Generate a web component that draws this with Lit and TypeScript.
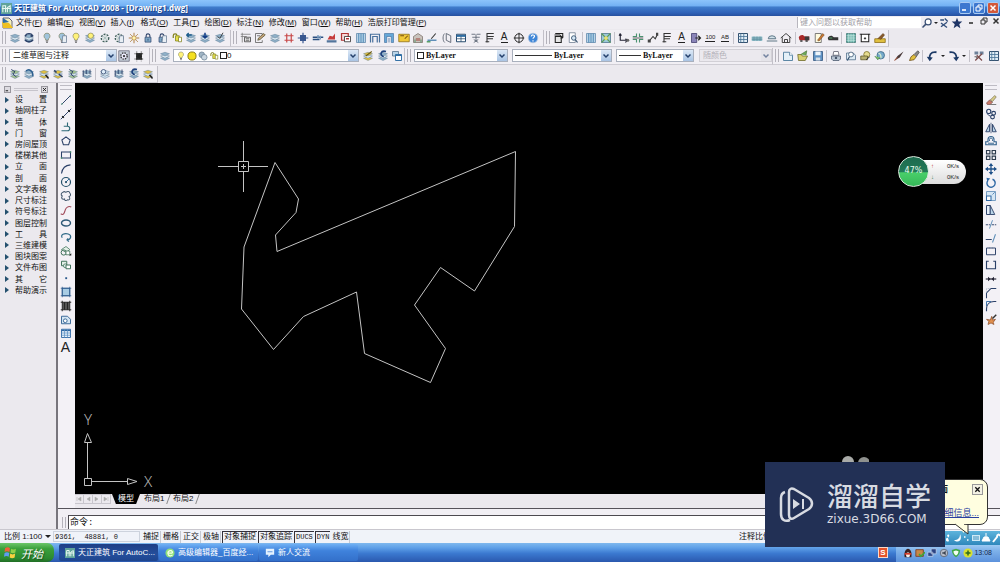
import { LitElement, html, svg, css, TemplateResult } from "lit";
import { customElement, property } from "lit/decorators.js";
import { classMap } from "lit/directives/class-map.js";

const NAVY = "#2b4068";
const BLUE = "#5f8fb8";
const PALE = "#b9d4e8";
const GOLD = "#e0c040";

/* Stack of sheets, the base of every layer icon */
const sheets = (c = "#8fb0c8") => svg`
  <path d="M2 11l6-2 6 2-6 3z" fill=${c} stroke="#5c7a94" stroke-width=".6"/>
  <path d="M2 8l6-2 6 2-6 3z" fill="#dce9f2" stroke="#5c7a94" stroke-width=".6"/>
  <path d="M2 5l6-2 6 2-6 3z" fill=${c} stroke="#5c7a94" stroke-width=".6"/>`;
const bulb = (c: string) => svg`
  <path d="M8 1.5a4 4 0 0 0-2.3 7.3l.6 2h3.4l.6-2A4 4 0 0 0 8 1.5z" fill=${c} stroke="#7a7a50" stroke-width=".8"/>
  <path d="M6.4 12h3.2M6.8 13.8h2.4" stroke="#555" stroke-width="1.2"/>`;
const lock = (c: string) => svg`
  <path d="M5.5 7V5a2.5 2.5 0 0 1 5 0v2" fill="none" stroke=${NAVY} stroke-width="1.4"/>
  <path d="M4 7h8v6.5H4z" fill=${c} stroke=${NAVY} stroke-width=".9"/><path d="M8 9v2.5" stroke=${NAVY}/>`;
const page = svg`<path d="M9 5h5v9H8z" fill="#e8eef4" stroke="#5a6f88" stroke-width=".9"/>`;
const flake = svg`<circle cx="8" cy="8" r="5" fill="none" stroke="#3f5f5a" stroke-width="1.8" stroke-dasharray="2.6 1.6"/>
  <path d="M8 4v8M4 8h8M5.3 5.3l5.4 5.4M10.7 5.3l-5.4 5.4" stroke="#9fb8b4" stroke-width=".8"/>`;

const ICONS: Record<string, TemplateResult> = {
  layers: sheets(),
  layerBack: svg`${sheets()}<path d="M3 6c1-5 9-5 10 0M13 6l-3-1M3 10c1 4 9 4 10 0" fill="none" stroke=${NAVY} stroke-width="1.8"/>`,
  bulbBlue: bulb("#9fc4dc"),
  bulbPage: svg`${bulb("#9fc4dc")}${page}`,
  bulb: bulb("#fff27a"),
  bulbLayers: svg`${sheets()}<circle cx="9" cy="5" r="3.6" fill="#fff27a" stroke="#7a7a50" stroke-width=".8"/>`,
  flake,
  flakePage: svg`${flake}${page}`,
  sun: svg`<circle cx="8" cy="8" r="3" fill="#fff3b0" stroke="#a06a20"/>
    <path d="M8 1v3M8 12v3M1 8h3M12 8h3M3 3l2 2M11 11l2 2M13 3l-2 2M5 11l-2 2" stroke="#a06a20" stroke-width="1.1"/>`,
  lock: lock("#7da6c4"),
  lockPage: svg`${lock("#7da6c4")}${page}`,
  unlock: svg`<path d="M3 8V5a2.5 2.5 0 0 1 5 0" fill="none" stroke="#80801a" stroke-width="1.6"/><path d="M6 5h5v7H6z" fill="#e6e04a" stroke="#80801a"/><path d="M10 7h4v6h-4z" fill="#fff" stroke="#80801a"/>`,
  layerPrev: svg`${sheets()}<path d="M2 4h7M2 4l3-2.5M2 4l3 2.5" stroke="#1d5c8c" stroke-width="1.8" fill="none"/>`,
  layerDown: svg`${sheets()}<path d="M8 1v6M5 5l3 3 3-3" stroke="#123c86" stroke-width="2" fill="none"/>`,
  layerWalk: svg`${sheets()}<path d="M12 1L8 8M5 6l3 3" stroke="#333" stroke-width="1.2" fill="none"/>`,
  layerMove: svg`${sheets("#a7c68d")}<path d="M3 2l5 3-3 3 5 4" stroke=${NAVY} stroke-width="1.3" fill="none"/>`,
  layerArc: svg`${sheets()}<path d="M4 4c4-4 10 0 9 7" stroke="#2c5f90" stroke-width="2" fill="none"/>`,
  layerGold: svg`${sheets(GOLD)}<path d="M10 9l4 5" stroke="#222" stroke-width="2"/>`,
  layerGold2: svg`${sheets(GOLD)}<path d="M3 3l3 3M9 8l5 4" stroke=${NAVY} stroke-width="2"/>`,
  layerPins: svg`${sheets("#88a8c0")}<path d="M3 3v8M7 2v6M12 2v6" stroke=${NAVY} stroke-width="1.2"/>`,
  layerGlass: svg`${sheets("#cfdfee")}<circle cx="6" cy="5" r="3" fill="#dfeefa" stroke=${NAVY}/>`,
  axis: svg`<path d="M1 3h13M1 6h8M3 1v13" stroke="#777"/><path d="M6 7h8v6H6z" fill="#fff" stroke="#333"/><path d="M7.5 9h5M7.5 11h5" stroke="#333"/>`,
  edit: svg`<path d="M2 2h9v3M2 2v12h9v-3" fill="none" stroke="#555"/><path d="M5 11l1-3 7-6 2 2-7 6z" fill="#c6a27a" stroke="#553"/><path d="M4 5h4" stroke="#555"/>`,
  hash: svg`<path d="M5 2v12M11 2v12M2 5h12M2 11h12" stroke="#c84848" stroke-width="1.6"/>`,
  column: svg`<path d="M4 4h8v8H4z" fill="#3a5890"/><path d="M8 1v14M1 8h14" stroke="#3a5890" stroke-width="1.6"/>`,
  wall: svg`<path d="M1 7h14M1 10h9" stroke="#2b4f80" stroke-width="1.8"/><path d="M8 4v5M11 5v5" stroke="#7a9cc0" stroke-width="2"/>`,
  roofRed: svg`<path d="M2 10l3-5 4 1 3-4v8z" fill="#c63c3c"/><path d="M1 11h13v3H1z" fill="#53759c"/>`,
  room: svg`<path d="M2 2h9v9H2z" fill="#f4d8d8" stroke="#b03434" stroke-width="1.6"/><path d="M6 6h8v7H6z" fill="#fff" stroke="#222"/><path d="M8 9h4" stroke="#b03434" stroke-width="2"/>`,
  stripes: svg`<path d="M2 2h12v12H2z" fill=${PALE} stroke="#5f86a8"/><path d="M5 2v12M8 2v12M11 2v12" stroke="#4d88b4" stroke-width="1.3"/>`,
  door: svg`<path d="M2 14V3h12v11M5 14V6h6v8" fill="none" stroke="#48709c" stroke-width="1.6"/>`,
  doorFill: svg`<path d="M2 2h12v12h-3V6H5v8H2z" fill="#66a8d8" stroke="#3c6a98" stroke-width=".8"/><path d="M8 8v6" stroke="#3c6a98"/>`,
  window: svg`<path d="M1 3h14v10H1z" fill="#f0c838" stroke="#8a6a12"/><path d="M3 5h5M9 9l4-4" stroke="#7a5010" stroke-width="1.4"/>`,
  house: svg`<path d="M2 6l6-4 6 4v8H2z" fill="#c9c3bd" stroke="#7c7068"/><path d="M5 8h6v4H5z" fill="#b5847c"/><path d="M4 14v-4M12 14v-4" stroke="#6a9a7a" stroke-width="1.6"/>`,
  slope: svg`<path d="M2 11h12" stroke="#5f8fb8" stroke-width="2"/><path d="M13 2L7 9" stroke="#333" stroke-width="1.4"/><path d="M1 13h5" stroke="#57a068" stroke-width="2"/>`,
  brackets: svg`<path d="M5 2C2 4 2 12 5 14M7 2v9l6 3V5z" fill="none" stroke="#5c6472" stroke-width="1.2"/>`,
  table: svg`<path d="M2 3h12v10H2z" fill="#fff" stroke="#24486c" stroke-width="1.3"/><path d="M2 4h12v2.5H2z" fill="#2f6ea4"/><path d="M2 9h12M8 6v7" stroke="#24486c"/>`,
  north: svg`<path d="M2 3h5M9 3h5M3 7h10M5 10l6 4M11 10l-6 4M8 3v10" stroke="#56606e" stroke-width="1.1" fill="none"/>`,
  levels: svg`<path d="M4 14V2h9M4 6h9M4 9h8M2 13h5" stroke="#333" stroke-width="1.4" fill="none"/>`,
  target: svg`<circle cx="8" cy="8" r="5.6" fill="none" stroke="#222" stroke-width="1.3"/><path d="M8 1v14M1 8h14" stroke="#222" stroke-width="1.2"/>`,
  help: svg`<circle cx="8" cy="8" r="6.4" fill="#3f86d8" stroke="#b8c8dc"/><path d="M5.6 6c.4-3 5-2.4 4.4 0-.3 1.200-2 1.400-2 3M8 11v1.600" fill="none" stroke="#fff" stroke-width="1.6"/>`,
  fileOut: svg`<path d="M3 2h10v4M3 6h8v8H3z" fill="#e6e6e6" stroke="#222" stroke-width="1.400"/><path d="M2 4h7l4 4M13 8V5M13 8h-3" stroke="#222" stroke-width="1.4" fill="none"/>`,
  findPage: svg`<path d="M3 1h8v13H3z" fill="#fff" stroke="#69788c"/><circle cx="9" cy="8" r="3" fill="#d6e8f6" stroke="#34506e" stroke-width="1.2"/><path d="M11 10l3 4" stroke="#34506e" stroke-width="1.6"/>`,
  block: svg`<path d="M2 2h12v12H2z" fill="#9cc9d8" stroke="#4a7088"/><path d="M2 2l12 12M14 2L2 14" stroke="#5f9a56" stroke-width="1.5"/><circle cx="8" cy="8" r="2.500" fill="#e8e070"/>`,
  elbow: svg`<path d="M3 2v9h9M3 2L1.500 5M3 2l1.500 3M12 11l-2-2M12 11l-2 3" stroke="#223" stroke-width="1.5" fill="none"/><circle cx="13" cy="11" r="2" fill="#666"/>`,
  crossGreen: svg`<path d="M1 6h5V2M10 2v4h5M15 10h-5v4M6 14v-4H1" stroke="#4b9270" stroke-width="1.5" fill="none"/><path d="M1 8h14" stroke="#333"/>`,
  leader: svg`<path d="M2 13L8 6l3 3 3-6" stroke="#333" stroke-width="1.4" fill="none"/><path d="M1 10h4v4H1zM12 1h3v4h-3z" fill="#444"/>`,
  exit: svg`<path d="M2 2h7v12H2z" fill="#8a84b8" stroke="#3c3868"/><path d="M7 8h7M11 5l3 3-3 3" stroke="#222" stroke-width="1.5" fill="none"/>`,
  gridBlue: svg`<path d="M2 2h12v12H2z" fill="#e2eef6" stroke="#2f4d6c" stroke-width="1.300"/><path d="M5 2v12M2 6h12M2 10h12M9 2v12" stroke="#4a7396" stroke-width="1.1"/>`,
  hatch: svg`<path d="M1 6h14v6H1z" fill="#8fbcc8"/><path d="M1 8h14M1 10h14M4 6v6M8 6v6M12 6v6" stroke="#5a8c9c" stroke-width=".8"/>`,
  dome: svg`<path d="M3 9a5 4 0 0 1 10 0zM1 12h14" fill="#d2e2ea" stroke="#5b7484" stroke-width="1.3"/>`,
  home: svg`<path d="M1 8l7-6 7 6M3 7v7h10V7M6 14v-4h4v4" fill="none" stroke="#333" stroke-width="1.2"/>`,
  carRed: svg`<path d="M1 7c2-4 6-4 8-1h6v5H2z" fill="#a82828"/><path d="M9 6h6v5H9z" fill="#3b3b3b"/><path d="M3 11h3v2H3zM10 11h3v2h-3z" fill="#333"/>`,
  carDark: svg`<path d="M1 8c2-4 6-4 8-1h6v4H2z" fill="#333"/><path d="M3 8h4" stroke="#57a068" stroke-width="1.4"/>`,
  note: svg`<path d="M3 2h8v12H3z" fill="#fffbe0" stroke="#555"/><path d="M6 11l7-9 2 2-7 8z" fill="#d07a30" stroke="#5a3a1a" stroke-width=".7"/>`,
  weave: svg`<path d="M2 2h12v12H2z" fill="#62b0a8" stroke="#3e7470"/><path d="M2 5h12M2 8h12M2 11h12M5 2v12M8 2v12M11 2v12" stroke="#cfeae4" stroke-width=".9"/>`,
  viewport: svg`<path d="M3 3h10v10H3z" fill="#fff" stroke="#222" stroke-width="1.4"/><path d="M1 3h2M13 3h2M8 7v3M6.500 8.500h3" stroke="#222" stroke-width="1.2"/>`,
  brush: svg`<path d="M1 9h14v5H1z" fill=${GOLD} stroke="#8a6a12"/><path d="M5 9l7-7 2 2-5 6" fill="#8a5a2a" stroke="#4a3010" stroke-width=".7"/>`,
  gear: svg`<path d="M1 1h14v14H1z" fill="#c3cbd6" stroke="#667"/><circle cx="8" cy="8" r="4.200" fill="#eef" stroke="#333" stroke-width="1.8" stroke-dasharray="2 1.300"/><circle cx="8" cy="8" r="1.500" fill="#333"/>`,
  gearDark: svg`<path d="M4 4h8v9H4z" fill="#222"/><path d="M2 5h12M2 12h12M5 2v13M11 2v13" stroke="#444" stroke-width="1.300" stroke-dasharray="1.500 1"/>`,
  layerEdit: svg`${sheets(GOLD)}<path d="M13 2L5 8" stroke="#6a5a10" stroke-width="1.4"/>`,
  layerUndo: svg`${sheets()}<path d="M12 2C5 0 3 7 9 9" stroke="#1d3f7c" stroke-width="2.200" fill="none"/>`,
  layerState: svg`<path d="M2 2h8v6H2z" fill=${PALE} stroke="#4c6a86"/><path d="M6 6h8v8H6z" fill="#fff" stroke="#2f6ea4" stroke-width="1.300"/><path d="M6 7h8" stroke="#2f6ea4" stroke-width="2"/>`,
  discs: svg`<circle cx="6" cy="6" r="4.500" fill="#9fb4c4" stroke="#5c7488"/><circle cx="10" cy="10" r="4.500" fill="#c9d6e0" stroke="#5c7488"/>`,
  newFile: svg`<path d="M2 3h8l4 4v7H2z" fill="#e4f0f8" stroke="#4c7a9c" stroke-width="1.2"/><path d="M10 3v4h4" fill="#fff" stroke="#4c7a9c"/>`,
  open: svg`<path d="M1 6h5l1 2h7l-3 6H2z" fill="#d8d070" stroke="#6a6420"/><path d="M5 6l8-5-1 6" fill="#6ea858" stroke="#3f6a30" stroke-width=".8"/>`,
  save: svg`<path d="M2 2h12v12H2z" fill="#5f92c4" stroke="#2c4f78"/><path d="M4.500 2h7v5h-7z" fill="#eef4fa"/><path d="M5 10h6v4H5z" fill="#d6dfe8"/>`,
  print: svg`<path d="M5 2h6l1 5H4z" fill="#fff" stroke="#556"/><path d="M2 8h12v4l-2 2H4l-2-2z" fill="#b8c4d2" stroke="#45546a"/><circle cx="8" cy="10.500" r="1.600" fill="#45546a"/>`,
  preview: svg`<path d="M2 4h9l3 3v6H2z" fill="#dceaf4" stroke="#4c6a86"/><circle cx="8" cy="6" r="3.200" fill="#fff" stroke="#34506e"/><path d="M6 9l-3 5" stroke="#34506e" stroke-width="1.6"/>`,
  plot: svg`<circle cx="9" cy="6" r="4" fill="#e6dc90" stroke="#746a20"/><path d="M1 8h9v5H1z" fill="#b8b070" stroke="#5a5420"/><path d="M8 13l5-4" stroke="#333" stroke-width="1.3"/>`,
  globe: svg`<circle cx="9" cy="7" r="5" fill="#76aacb" stroke="#34607e"/><path d="M6 4c2 1 4 3 3 7" fill="none" stroke="#d8ecd0" stroke-width="1.800"/><path d="M1 8l4 5 3-3" fill="#7cbf6a" stroke="#2f6a38" stroke-width=".8"/>`,
  knife: svg`<path d="M2 14l4-6 8-6-5 8z" fill="#4a3a3a"/><path d="M2 14l4-4" stroke="#a05038" stroke-width="1.400"/>`,
  match: svg`<path d="M2 14l2-5 4-3 3 3-3 4z" fill=${GOLD} stroke="#6a4a10"/><path d="M8 6l5-5 2 2-4 6" fill="#888" stroke="#333" stroke-width=".8"/>`,
  undo: svg`<path d="M14 3C6 2 4 7 5 12" fill="none" stroke="#1d3a66" stroke-width="2.400"/><path d="M1 9l4 6 4-5z" fill="#1d3a66"/>`,
  redo: svg`<path d="M2 3c8-1 10 4 9 9" fill="none" stroke="#1d3a66" stroke-width="2.400"/><path d="M15 9l-4 6-4-5z" fill="#1d3a66"/>`,
  tools: svg`<path d="M2 2h5v4H2zM9 2h5v4H9z" fill="#6d8098"/><path d="M3 14l9-9M5 7l7 7" stroke="#7a4a4a" stroke-width="1.600"/><path d="M2 9h3v2" fill="none" stroke="#333"/>`,
  line: svg`<path d="M2 14L14 2" stroke=${NAVY} stroke-width="1.300"/><path d="M2 13h1.500M13 2.500h1.500" stroke="#4b9270" stroke-width="2"/>`,
  xline: svg`<path d="M1 15L15 1" stroke=${NAVY} stroke-width="1.300"/><path d="M3 11l2 2M11 3l2 2" stroke="#111" stroke-width="2.200"/>`,
  pline: svg`<path d="M2 13h8a3 3 0 0 0 0-6H5M10 2v5" fill="none" stroke="#2f6a78" stroke-width="1.500"/>`,
  polygon: svg`<path d="M8 2.500l5.500 4.200-2 6.300h-7l-2-6.300z" fill="none" stroke=${NAVY} stroke-width="1.400"/>`,
  rect: svg`<path d="M2 4h12v8H2z" fill="none" stroke=${NAVY} stroke-width="1.400"/><path d="M1 12h2M13 4h2" stroke="#4b9270" stroke-width="2"/>`,
  arc: svg`<path d="M2 14C3 7 7 3 14 2.500" fill="none" stroke=${NAVY} stroke-width="1.500"/>`,
  circle: svg`<circle cx="8" cy="8" r="6" fill="none" stroke="#24506a" stroke-width="1.600"/><path d="M8 8l4-4" stroke="#2b70a8" stroke-width="1.300"/><circle cx="8" cy="8" r="1.500" fill="#24506a"/>`,
  cloud: svg`<path d="M4 3c2-2 3 0 4 0 2-2 5-1 5 1 2 2 1 4-1 5 2 2 1 5-2 4-2 2-4 1-4-1-3 1-5-1-3-4-2-1-2-4 1-5z" fill="none" stroke="#44586e" stroke-width="1.400"/>`,
  spline: svg`<path d="M1 13c4 3 5-2 6-5s4-6 8-4" fill="none" stroke="#a04858" stroke-width="1.400"/>`,
  ellipse: svg`<ellipse cx="8" cy="8" rx="6" ry="4" fill="none" stroke="#2f5a78" stroke-width="1.900"/>`,
  earc: svg`<path d="M3 9C0 5 6 2.500 11 4s4 8-2 8M9 12l2-2M9 12l3 2" fill="none" stroke="#2f6a88" stroke-width="1.600"/>`,
  insert: svg`<path d="M2 6l6-4 5 4-5 4z" fill="#e4f0e8" stroke="#3e7058"/><circle cx="5" cy="10" r="3.500" fill="none" stroke="#3e7058" stroke-width="1.300"/><path d="M8 8h5v5H8z" fill="#fff" stroke="#3e7058"/><path d="M12 14h3v-3z" fill="#111"/>`,
  makeBlock: svg`<path d="M2 3h7v6H2z" fill="#e4f0e8" stroke="#3e7058" stroke-width="1.300"/><circle cx="7" cy="9" r="2.500" fill="#dff0ea" stroke="#3e7058"/><path d="M8 8h6v5H8z" fill="#fff" stroke="#3e7058" stroke-width="1.300"/>`,
  point: svg`<path d="M7 7h2.500v2.500H7z" fill="#2b5a8c"/>`,
  hatchFill: svg`<path d="M3 3h10v10H3z" fill="#a8cce4" stroke="#2b5a8c" stroke-width="1.200"/><path d="M3 1v14M13 1v14M1 3h14M1 13h14" stroke="#2b5a8c"/>`,
  gradient: svg`<path d="M3 3h10v10H3z" fill="#555"/><path d="M3 1v14M13 1v14M1 3h14M1 13h14M6 3v10M10 3v10" stroke="#222" stroke-width="1.200"/>`,
  region: svg`<path d="M2 3h8l4 4v6H2z" fill="#d4e6f4" stroke="#3c6a98" stroke-width="1.300"/><circle cx="7" cy="9" r="2.500" fill="#fff" stroke="#3c6a98" stroke-width="1.300"/>`,
  grid: svg`<path d="M2 3h12v11H2z" fill="#e6f0fa" stroke="#2f68a4" stroke-width="1.200"/><path d="M2 4.500h12" stroke="#2f68a4" stroke-width="2"/><path d="M2 8h12M2 11h12M6 3v11M10 3v11" stroke="#5f92c4"/>`,
  erase: svg`<path d="M2 12l4-4 4 3-3 3H3z" fill="#c87868" stroke="#6a4040" stroke-width=".8"/><path d="M7 8l6-6 2 2-5 6z" fill="#d8cc8a" stroke="#6a6040" stroke-width=".8"/><path d="M7 14h8" stroke="#555"/>`,
  copy: svg`<circle cx="5" cy="4.500" r="2.800" fill="none" stroke=${NAVY} stroke-width="1.500"/><circle cx="11.500" cy="7" r="2.500" fill="none" stroke=${NAVY} stroke-width="1.500"/><circle cx="10" cy="12" r="2.500" fill="none" stroke=${NAVY} stroke-width="1.500"/><path d="M3 8l4 3" stroke=${NAVY} stroke-width="1.300"/>`,
  mirror: svg`<path d="M6 3v10H1zM10 3v10h5z" fill=${PALE} stroke=${NAVY} stroke-width="1.200"/><path d="M8 1v14" stroke=${NAVY}/>`,
  offset: svg`<path d="M1 13V9h3V6a4 4 0 0 1 8 0v3h3v4z" fill="none" stroke="#30608c" stroke-width="1.500"/><path d="M4 11h8M6 8V6a2 2 0 0 1 4 0v2" fill="none" stroke="#30608c" stroke-width="1.200"/>`,
  array: svg`<path d="M2 2h4.500v4.500H2zM9.500 2H14v4.500H9.500zM2 9.500h4.500V14H2zM9.500 9.500H14V14H9.500z" fill="none" stroke="#2c3a4c" stroke-width="1.500"/>`,
  move: svg`<path d="M8 2v12M2 8h12" stroke="#1f4f88" stroke-width="1.700"/><path d="M8 0l3 4H5zM8 16l3-4H5zM0 8l4-3v6zM16 8l-4-3v6z" fill="#1f4f88"/>`,
  rotate: svg`<path d="M4 4.500a5.500 5.500 0 1 0 6-1.500" fill="none" stroke="#2f68a4" stroke-width="1.900"/><path d="M2 1l5 1-4 4z" fill="#2f68a4"/>`,
  scale: svg`<path d="M2 2h12v12H2z" fill="#d6e6f4" stroke="#6a94bc" stroke-width="1.200"/><path d="M2 8h6v6H2z" fill="#fff" stroke="#2f68a4" stroke-width="1.400"/><path d="M10 6l3-3" stroke="#2f68a4"/>`,
  stretch: svg`<path d="M2 2h5v12H2z" fill="#e6f0fa" stroke=${NAVY} stroke-width="1.300"/><path d="M7 2l6 12H7z" fill=${PALE} stroke=${NAVY} stroke-width="1.200"/>`,
  trim: svg`<path d="M1 9h6M9 9h6" stroke=${NAVY} stroke-width="1.200" stroke-dasharray="3 1"/><path d="M10 3L6 14" stroke=${BLUE} stroke-width="1.300"/>`,
  extend: svg`<path d="M1 10h8" stroke=${NAVY} stroke-width="1.300"/><path d="M14 3l-4 11" stroke=${BLUE} stroke-width="1.400"/>`,
  breakAt: svg`<path d="M7 4H2v9h12V4H9" fill="none" stroke=${NAVY} stroke-width="1.300"/><path d="M7 3v2M9 3v2" stroke=${NAVY}/>`,
  breakGap: svg`<path d="M5 3H2v10h12V3h-3" fill="none" stroke=${NAVY} stroke-width="1.500"/>`,
  join: svg`<path d="M1 8h14" stroke="#223" stroke-width="1.500"/><path d="M7.500 8L4 5v6zM8.500 8L12 5v6z" fill="#223"/>`,
  chamfer: svg`<path d="M2 15V8l6-6h7" fill="none" stroke=${NAVY} stroke-width="1.400"/><path d="M2 8V2h6" fill="none" stroke="#9ab" stroke-dasharray="1 1"/>`,
  fillet: svg`<path d="M2 15v-3C2 6 6 2 12 2h3" fill="none" stroke=${NAVY} stroke-width="1.500"/><path d="M2 8V2h6" fill="none" stroke="#2f68a4" stroke-width="1.200"/>`,
  explode: svg`<path d="M2 7l5 1 2-5 1 5 4-1-3 4 1 3-4-2-4 2 1-4z" fill="#e09050" stroke="#7a3a1a" stroke-width=".8"/><path d="M10 6l5-5" stroke="#333" stroke-width="1.800"/>`,
  search: svg`<circle cx="9.500" cy="6.500" r="4" fill="#fff" stroke="#3a4f74" stroke-width="1.600"/><path d="M6.500 9.500L2 14" stroke="#3a4f74" stroke-width="2"/>`,
  contact: svg`<path d="M3 4h5M9 2l4 4M4 8l8 6M12 7l-8 6" stroke="#34507c" stroke-width="1.800"/>`,
  star: svg`<path d="M8 1l2 5h5l-4 3.500 1.500 5.500L8 12l-4.500 3L5 9.500 1 6h5z" fill="#1f3566"/>`,
};

/* Characters set as live text inside an icon button */
const LETTERS: Record<string, string> = { textA: "A", dimA: "A", dimNum: "100", dimAb: "AB" };

const icon = (name: string) => html`<svg class="ic" viewBox="0 0 16 16" aria-hidden="true">${ICONS[name]}</svg>`;

const base = css`
  * { box-sizing: border-box; }
  button { font: inherit; color: inherit; margin: 0; padding: 0; border: 0; background: none; }
  .ic { display: block; width: 12px; height: 12px; }
`;

@customElement("tool-strip")
class ToolStrip extends LitElement {
  @property() names = "";
  @property({ type: Boolean, reflect: true }) vertical = false;
  static styles = [base, css`
    :host { display: flex; align-items: center; justify-content: space-between; }
    :host([vertical]) { flex-direction: column; }
    .tool { display: grid; place-items: center; width: 12px; height: 12px; }
    .sep { width: 1px; height: 12px; background: #c4c2ca; }
    .drop { width: 4px; height: 12px; display: grid; place-items: center; }
    .drop::after { content: ""; border: 2px solid transparent; border-top-color: #222; border-bottom: 0; }
    .letter { font: 11px/12px "Liberation Sans", sans-serif; color: #222; }
    .letter.big { font-size: 14px; }
    .letter.under { border-bottom: 1px solid #222; font-size: 10px; line-height: 10px; height: 11px; }
    .letter.tiny { font-size: 6px; border-bottom: 1px solid #222; line-height: 8px; height: 9px; }
  `];
  render() {
    return this.names.split(" ").map((n) => {
      if (n === "|") return html`<span class="sep"></span>`;
      if (n === "v") return html`<button class="drop" aria-label="more"></button>`;
      const text = LETTERS[n];
      return html`<button class="tool" aria-label=${n}>${text
        ? html`<span class=${classMap({ letter: true, big: n === "textA", under: n === "dimA", tiny: text.length > 1 })}>${text}</span>`
        : icon(n)}</button>`;
    });
  }
}

@customElement("combo-box")
class ComboBox extends LitElement {
  @property() label = "";
  @property() value = "";
  @property() mark = "";
  @property({ type: Boolean, reflect: true }) disabled = false;
  static styles = [base, css`
    :host { display: grid; height: 13px; border: 1px solid #a9b0bd; background: #fff; }
    :host([disabled]) { background: #ebe9ee; border-color: #d2d0d6; }
    .mark, select, .arrow { grid-area: 1 / 1; }
    .mark { display: flex; align-items: center; gap: 1px; padding-left: 2px; pointer-events: none; z-index: 1; }
    .mark .ic { width: 10px; height: 10px; }
    select { appearance: none; min-width: 0; width: 100%; border: 0; margin: 0; background: transparent; color: #111; padding: 0 10px 0 3px;
      font: 8px/11px "Liberation Sans", "Noto Sans CJK SC", sans-serif; height: 11px; }
    select:disabled { color: #b2b0b8; opacity: 1; }
    .latin { font-family: "Liberation Serif", serif; font-weight: bold; }
    .box { padding-left: 11px; }
    .rule { padding-left: 41px; }
    .short { padding-left: 26px; }
    .layer { padding-left: 53px; }
    .square { width: 7px; height: 7px; border: 1px solid #222; background: #fff; }
    .stroke { width: 37px; height: 1px; background: #333; }
    .stroke.brief { width: 22px; }
    .arrow { justify-self: end; width: 10px; height: 11px; background: linear-gradient(#dce8f6, #a9c4e4); display: grid; place-items: center; pointer-events: none; }
    .arrow svg { width: 6px; height: 6px; }
    :host([disabled]) .arrow { background: #e2e1e7; opacity: .6; }
  `];
  render() {
    const m = this.mark;
    return html`
      <span class="mark">${m === "layer"
        ? html`${icon("bulb")}<svg class="ic" viewBox="0 0 16 16"><circle cx="8" cy="8" r="6.500" fill="#f4e020" stroke="#8a7a10" stroke-width="1.500"/></svg>${icon("discs")}${icon("unlock")}<span class="square"></span>`
        : m === "box" ? html`<span class="square"></span>`
        : m ? html`<span class=${classMap({ stroke: true, brief: m === "short" })}></span>` : ""}</span>
      <select class=${classMap({ [m]: m !== "", latin: m !== "" && m !== "layer" })}
        aria-label=${this.label} ?disabled=${this.disabled}><option>${this.value}</option></select>
      <span class="arrow"><svg viewBox="0 0 6 6"><path d="M.5 1.500L3 4l2.500-2.500" fill="none" stroke="#24406c" stroke-width="1.500"/></svg></span>`;
  }
}

@customElement("app-root")
class AppRoot extends LitElement {
  static styles = [base, css`
    :host { display: flex; flex-direction: column; height: 100vh; overflow: hidden; position: relative; background: #ebe9ee; color: #111;
      font: 8px/11px "Liberation Sans", "Noto Sans CJK SC", sans-serif; }
    a { color: inherit; }
    .title { display: flex; align-items: center; gap: 2px; height: 16px; padding: 0 1px; color: #fff;
      background: linear-gradient(#8cc4fb 0, #74b2f4 35%, #3f7ccb 45%, #2f62b8 80%, #27509f); }
    .title h1 { flex: 1; margin: 0; font: bold 8px/14px "Open Sans", "Noto Sans CJK SC", sans-serif; text-shadow: 1px 1px 0 #1e4488; white-space: nowrap; }
    .win { width: 12px; height: 12px; border: 1px solid #a9cbf3; border-radius: 2px; background: #3c78d0; display: grid; place-items: center; }
    .win.close { background: #d2583a; }
    .win svg { width: 8px; height: 8px; }
    .appic { width: 11px; height: 11px; }

    .menu { display: flex; align-items: center; height: 13px; padding-left: 2px; background: #efedf2; }
    .menu nav { display: flex; gap: 5px; margin-left: 2px; flex: 1; }
    .menu nav button { white-space: nowrap; min-width: 25px; text-align: left; }
    .menu u { text-decoration-thickness: 1px; }
    .ask { width: 124px; height: 11px; border: 0; border-left: 1px solid #b8b6be; background: #fff; padding: 0 2px; font: inherit; color: #999; }
    .ask::placeholder { color: #a3a1a8; }
    .askbar { width: 42px; height: 10px; }
    .mdi { display: flex; gap: 4px; width: 37px; padding-left: 5px; }
    .mdi svg { width: 8px; height: 8px; }

    .row { display: flex; align-items: center; height: 18px; }
    .band { display: flex; align-items: center; height: 17px; border-right: 1px solid #c2c0c8; border-bottom: 1px solid #cfcdd4; background: #f1eff4; }
    .grip { width: 4px; height: 13px; margin: 0 3px 0 2px; border-left: 1px solid #b4b2ba; border-right: 1px solid #b4b2ba; flex: none; }
    .t1 { width: 217px; margin: 0 4px 0 0; }
    .t2 { width: 299px; margin: 0 4px 0 0; }
    .t3 { width: 333px; margin: 0 2px 0 0; }
    .t4 { width: 27px; margin: 0 4px 0 1px; }
    .t5 { width: 12px; margin-right: 2px; }
    .t6 { width: 41px; margin: 0 1px 0 3px; }
    .t7 { flex: 1; margin-left: 0; }
    .t8 { width: 145px; margin-right: 3px; }
    .c1 { width: 108px; } .c2 { width: 186px; } .c3 { width: 94px; margin-right: 4px; }
    .c4 { width: 100px; margin-right: 4px; } .c5 { width: 78px; margin-right: 5px; } .c6 { width: 73px; }
    .grow { flex: 1; border-right: 0; }

    .work { flex: 1; min-height: 0; display: flex; }
    .palette { width: 58px; flex: none; border-right: 2px solid #77757c; padding-top: 2px; }
    .phead { display: flex; align-items: center; gap: 3px; padding: 0 8px 0 4px; height: 9px; }
    .phead button { width: 7px; height: 7px; background: #dddbe1; border: 1px solid #99979e; display: grid; place-items: center; }
    .phead svg { width: 5px; height: 5px; }
    .phead i { flex: 1; height: 3px; border: solid #c6c4cb; border-width: 1px 0; }
    .palette ul { list-style: none; margin: 0; padding: 0; display: grid; grid-auto-rows: 1fr; height: 202px; }
    .palette li button { display: flex; align-items: center; height: 100%; gap: 6px; padding-left: 5px; }
    .palette li button::before { content: ""; border: 3px solid transparent; border-left: 4px solid #24506e; border-right: 0; }
    .palette li span { width: 32px; text-align-last: justify; white-space: nowrap; }

    .mid { flex: 1; min-width: 0; display: flex; flex-direction: column; }
    .stage { flex: 1; min-height: 0; display: flex; }
    .vbar { width: 17px; flex: none; padding: 2px 3px 0 1px; display: flex; flex-direction: column; align-items: center; gap: 4px; background: #f3f1f6; }
    .vbar::before { content: ""; width: 12px; height: 3px; border: solid #bebcc4; border-width: 1px 0; flex: none; }
    .draw { height: 259px; }
    .modify { height: 232px; }
    .sheet { flex: 1; min-width: 0; display: flex; flex-direction: column; }
    .canvas { flex: 1; min-height: 0; width: 100%; display: block; background: #000; }
    .ucs { font: 15px "Noto Sans", sans-serif; font-weight: 300; fill: #b4b4b4; }
    .tabs { display: flex; align-items: stretch; height: 10px; margin-bottom: 4px; }
    .tabs .nav { width: 9px; border: 1px solid #c8c6cd; border-left: 0; display: grid; place-items: center; color: #999; }
    .tabs .nav svg { width: 6px; height: 6px; }
    .tab { padding: 0 4px; line-height: 10px; white-space: nowrap; border-right: 1px solid #888; transform: skewX(-20deg); }
    .tab span { display: block; transform: skewX(20deg); }
    .tab.on { background: #000; color: #fff; padding: 0 6px; margin-left: 1px; transform: none; clip-path: polygon(0 0, 100% 0, 86% 100%, 14% 100%); border: 0; }
    .cmd { display: flex; align-items: stretch; height: 21px; border-top: 1px solid #55535a; padding: 6px 0 0 3px; background: #f1eff4; }
    .cmd .grip { height: 11px; margin: 2px 2px 0 1px; }
    .cmd label { display: flex; flex: 1; border: solid #4c4a50; border-width: 1px 0 0 1px; background: #fff; padding-left: 1px; align-items: center; font: 9px/12px "Liberation Mono", "Noto Sans CJK SC", monospace; }
    .cmd input { flex: 1; min-width: 0; border: 0; padding: 0; height: 11px; outline: 0; font: inherit; }

    .status { display: flex; align-items: center; height: 14px; padding-left: 4px; background: #f0f3f9; border-top: 1px solid #c9c7ce; }
    .scale { display: flex; align-items: center; gap: 3px; width: 49px; white-space: nowrap; }
    .scale::after { content: ""; border: 3px solid transparent; border-top-color: #222; border-bottom: 0; }
    .coord { width: 87px; height: 11px; border: 1px solid #cdd3dd; white-space: pre; padding-left: 1px; font: 7px/10px "Liberation Mono", monospace; }
    .modes { display: flex; gap: 1px; margin-left: 2px; }
    .modes button { padding: 0 1px; height: 12px; line-height: 11px; border-right: 1px solid #c6cad2; white-space: nowrap; }
    .modes button.on { border: solid #33313a; border-width: 1px 0 0 1px; line-height: 10px; }
    .modes .mono { font: 7px/10px "Liberation Mono", monospace; }
    .anno { margin-left: auto; width: 261px; white-space: nowrap; }

    .taskbar { display: flex; align-items: stretch; height: 19px; color: #fff; background: linear-gradient(#7fb8ee 0, #5fa0e8 25%, #3b79d0 55%, #2a58ae); }
    .start { display: flex; align-items: center; gap: 4px; width: 54px; padding-left: 4px; border-radius: 0 7px 7px 0; background: linear-gradient(#6cc66a, #3aa03c 30%, #2c8a30 80%, #216e26);
      font: italic 11px/18px "Noto Sans CJK SC", sans-serif; text-shadow: 1px 1px 1px #174c1a; margin-right: 5px; white-space: nowrap; }
    .start svg { width: 13px; height: 13px; flex: none; }
    .task { display: flex; align-items: center; gap: 3px; width: 99px; margin: 1px 1px 1px 0; padding-left: 6px; border-radius: 2px; background: linear-gradient(#6fb0f4, #3f82dc 40%, #3370ca); white-space: nowrap; }
    .task.on { background: linear-gradient(#1f3f86, #244f9c 60%, #1e458e); }
    .task svg { width: 10px; height: 10px; flex: none; }
    .sogou { margin: 4px 8px 4px auto; width: 10px; height: 11px; background: #e4532c; border: 1px solid #fbd9c8; font: bold 8px/9px "Liberation Sans", sans-serif; text-align: center; }
    .tray { display: flex; align-items: center; justify-content: space-between; width: 104px; padding: 0 8px 0 7px; background: linear-gradient(#a9d2f6, #7fb2ea 40%, #5c92dc); color: #14284c; }
    .tray svg { width: 10px; height: 10px; }
    .tray time { font-size: 7px; }

    .meter { position: absolute; left: calc(100% - 102px); top: 156px; display: flex; align-items: center; color: #222; }
    .ball { width: 31px; height: 31px; border-radius: 50%; border: 1px solid #d8e8dc; background: linear-gradient(#1d6a4e 0, #237a58 52%, #49cf6a 54%, #35b858); color: #e8fff0;
      font: 8px/28px "DejaVu Sans", sans-serif; text-align: center; z-index: 1; }
    .rates { width: 53px; height: 24px; margin-left: -16px; padding: 1px 7px 1px 18px; border-radius: 0 12px 12px 0; background: linear-gradient(#fff, #dcdcdc);
      font: 6px/11px "Liberation Sans", sans-serif; display: grid; grid-template-columns: auto auto; justify-content: space-between; }
    .up { color: #c0392b; } .down { color: #2f7a4c; }
    .balloon { position: absolute; right: 12px; bottom: 37px; width: 90px; height: 46px; border: 1px solid #333; border-radius: 8px; background: #fffee0; padding: 4px 4px 0 0; }
    .bhead { display: flex; justify-content: flex-end; align-items: center; gap: 24px; font-weight: bold; }
    .bhead button { width: 11px; height: 11px; border: 1px solid #999; background: #f3f1e4; display: grid; place-items: center; }
    .bhead svg { width: 7px; height: 7px; }
    .balloon a { display: block; text-align: right; margin: 13px 4px 0 0; color: #2a3fa0; font-size: 9px; }
    .tail { position: absolute; left: 56px; top: 43px; width: 20px; height: 12px; }
    .ime { position: absolute; right: 0; bottom: 17px; width: 60px; height: 14px; background: linear-gradient(#5db4dc, #2f88bc); display: flex; align-items: center; justify-content: flex-end; gap: 1px; }
    .ime svg { width: 54px; height: 12px; }
    .ears { position: absolute; right: 131px; top: 456px; width: 32px; height: 10px; }
    .brand { position: absolute; right: 55px; bottom: 15px; width: 180px; height: 85px; background: #223055; color: #d8dbe2; display: flex; align-items: center; gap: 12px; padding-left: 14px; }
    .brand svg { width: 36px; height: 38px; flex: none; }
    .brand p { margin: 0; white-space: nowrap; font: 26px/26px "Noto Sans CJK SC", sans-serif; font-weight: 500; padding-bottom: 2px; }
    .brand small { display: block; margin-top: 4px; font: 12px/14px "DejaVu Sans", sans-serif; }
  `];

  private menus: [string, string][] = [["文件", "F"], ["编辑", "E"], ["视图", "V"], ["插入", "I"], ["格式", "O"], ["工具", "T"],
    ["绘图", "D"], ["标注", "N"], ["修改", "M"], ["窗口", "W"], ["帮助", "H"], ["浩辰打印管理", "P"]];
  private groups = ["设 置", "轴网柱子", "墙 体", "门 窗", "房间屋顶", "楼梯其他", "立 面", "剖 面", "文字表格", "尺寸标注",
    "符号标注", "图层控制", "工 具", "三维建模", "图块图案", "文件布图", "其 它", "帮助演示"];
  private modes: [string, boolean][] = [["捕捉", false], ["栅格", false], ["正交", false], ["极轴", false], ["对象捕捉", true],
    ["对象追踪", true], ["DUCS", true], ["DYN", true], ["线宽", false]];

  private appIcon = html`<svg class="appic" viewBox="0 0 12 12" aria-hidden="true"><path d="M0 0h12v12H0z" fill="#5fa39a"/><path d="M2 10V3h3v7M7 10V5l3-2v7M1 6h10" fill="none" stroke="#e6f6f0" stroke-width="1.200"/></svg>`;
  private cross = (c: string) => html`<svg viewBox="0 0 8 8" aria-hidden="true"><path d="M1.500 1.500l5 5M6.500 1.500l-5 5" stroke=${c} stroke-width="1.500"/></svg>`;
  private dash = (c: string) => html`<svg viewBox="0 0 8 8" aria-hidden="true"><path d="M1 6h4" stroke=${c} stroke-width="1.600"/></svg>`;
  private panes = (c: string) => html`<svg viewBox="0 0 8 8" aria-hidden="true"><path d="M3 3V1h4v4H5M1 3h4v4H1z" fill="none" stroke=${c}/></svg>`;

  render() {
    return html`
      <header class="title">
        ${this.appIcon}
        <h1>天正建筑 For AutoCAD 2008 - [Drawing1.dwg]</h1>
        <button class="win" aria-label="minimize">${this.dash("#fff")}</button>
        <button class="win" aria-label="restore">${this.panes("#fff")}</button>
        <button class="win close" aria-label="close">${this.cross("#fff")}</button>
      </header>

      <div class="menu">
        <svg class="ic" viewBox="0 0 12 12" aria-hidden="true"><path d="M1 1h6l3 3v7H1z" fill="#f4efc0" stroke="#667"/><path d="M0 5l7 1 4 5H1z" fill="#f0c020"/><path d="M1 1l6 4-6 1z" fill="#2f6ea4"/></svg>
        <nav>${this.menus.map(([t, k]) => html`<button>${t}(<u>${k}</u>)</button>`)}</nav>
        <input class="ask" aria-label="help question" placeholder="键入问题以获取帮助">
        <tool-strip class="askbar" names="search v contact star"></tool-strip>
        <div class="mdi">
          <button aria-label="minimize drawing">${this.dash("#333")}</button>
          <button aria-label="restore drawing">${this.panes("#333")}</button>
          <button aria-label="close drawing">${this.cross("#333")}</button>
        </div>
      </div>

      <div class="row">
        <div class="band"><i class="grip"></i><tool-strip class="t1" names="layers layerBack | bulbBlue bulbPage bulb bulbLayers flake flakePage sun lock lockPage unlock layerPrev layerDown layerWalk"></tool-strip></div>
        <div class="band"><i class="grip"></i><tool-strip class="t2" names="axis edit layers hash column wall roofRed room stripes door doorFill window house slope brackets table north levels dimA target help"></tool-strip></div>
        <div class="band"><i class="grip"></i><tool-strip class="t3" names="fileOut findPage | stripes block | elbow crossGreen leader levels dimA exit dimNum dimAb | gridBlue hatch dome home | carRed note carDark | weave viewport brush"></tool-strip></div>
      </div>

      <div class="row">
        <div class="band"><i class="grip"></i><combo-box class="c1" label="workspace" value="二维草图与注释"></combo-box><tool-strip class="t4" names="gear gearDark"></tool-strip></div>
        <div class="band"><i class="grip"></i><tool-strip class="t5" names="layers"></tool-strip><combo-box class="c2" label="layer" value="0" mark="layer"></combo-box><tool-strip class="t6" names="layerEdit layerUndo layerState"></tool-strip></div>
        <div class="band"><i class="grip"></i>
          <combo-box class="c3" label="colour" value="ByLayer" mark="box"></combo-box>
          <combo-box class="c4" label="linetype" value="ByLayer" mark="rule"></combo-box>
          <combo-box class="c5" label="lineweight" value="ByLayer" mark="short"></combo-box>
          <combo-box class="c6" label="plot style" value="随颜色" disabled></combo-box></div>
        <div class="band grow"><i class="grip"></i><tool-strip class="t7" names="newFile open save | print preview plot globe | knife match | undo v redo v | tools gridBlue"></tool-strip></div>
      </div>

      <div class="row">
        <div class="band"><i class="grip"></i><tool-strip class="t8" names="layerMove layerArc layerGold layerGold2 layerMove layerPins | layerGlass layerPins layerUndo layerGold"></tool-strip></div>
      </div>

      <div class="work">
        <aside class="palette">
          <div class="phead"><button aria-label="collapse">${this.dash("#222")}</button><i></i><button aria-label="close palette">${this.cross("#222")}</button></div>
          <ul>${this.groups.map((g) => html`<li><button><span>${g}</span></button></li>`)}</ul>
        </aside>
        <div class="mid">
          <div class="stage">
            <div class="vbar"><tool-strip vertical class="draw" names="line xline pline polygon rect arc circle cloud spline ellipse earc insert makeBlock point hatchFill gradient region grid textA"></tool-strip></div>
            <div class="sheet">
              <svg class="canvas" role="img" aria-label="drawing">
                <g fill="none" stroke="#c4c4c4">
                  <path d="M200 79.500L223.500 116L221 129.500L200.500 152L202 168.500L440.500 68.500L439.500 143.500L399.500 208L365.500 184.500L339.500 222L370.500 265.500L355.500 299.500L289.500 270.500L281.500 209L228.500 233.500L198.500 266.500L166.500 226L169 164Z"/>
                  <path d="M143 83.500H163M173 83.500H193M168.500 58V78M168.500 88V109M163.500 78.500H173.500V88.500H163.500ZM166 83.500H171M168.500 81V86"/>
                  <path d="M9.500 395.500H16.500V402.500H9.500ZM12.500 395V360M12.500 350.500L9.500 359.500H16.500ZM17 398.500H52M62 398.500L52.500 395.500V401.500Z"/>
                </g>
                <text class="ucs" x="9" y="342">Y</text><text class="ucs" x="69" y="404">X</text>
              </svg>
              <div class="tabs">
                ${["M1 1v4M5 1L2 3l3 2z", "M5 1L2 3l3 2z", "M1 1l3 2-3 2z", "M1 1l3 2-3 2zM5 1v4"].map((d) => html`<button class="nav" aria-label="scroll tabs"><svg viewBox="0 0 6 6"><path d=${d} fill="#aaa" stroke="#aaa" stroke-width=".5"/></svg></button>`)}
                <button class="tab on">模型</button><button class="tab"><span>布局1</span></button><button class="tab"><span>布局2</span></button>
              </div>
            </div>
            <div class="vbar"><tool-strip vertical class="modify" names="erase copy mirror offset array move rotate scale stretch trim extend breakAt breakGap join chamfer fillet explode"></tool-strip></div>
          </div>
          <div class="cmd"><i class="grip"></i><label>命令:<input aria-label="command"></label></div>
        </div>
      </div>

      <div class="status">
        <button class="scale">比例 1:100</button>
        <span class="coord">9361,  48881, 0</span>
        <div class="modes">${this.modes.map(([t, on]) => html`<button class=${classMap({ on, mono: t[0] === "D" })}>${t}</button>`)}</div>
        <span class="anno">注释比例:</span>
      </div>

      <footer class="taskbar">
        <button class="start"><svg viewBox="0 0 12 12" aria-hidden="true"><path d="M1 2c2-1 3-1 4.500 0L5 5.500C3.500 4.500 2 4.500.5 5.500z" fill="#f0603a"/><path d="M6.500 2.500c1.500 1 3 1 4.500 0L10.500 6C9 7 7.500 7 6 6z" fill="#8fd04a"/><path d="M.5 6.500c1.500-1 3-1 4.300 0L4.300 10C3 9 1.500 9 0 10z" fill="#5f9cf0"/><path d="M5.700 7c1.500 1 3 1 4.600 0l-.5 3.500c-1.500 1-3 1-4.500 0z" fill="#f8d040"/></svg>开始</button>
        <button class="task on">${this.appIcon}天正建筑 For AutoC...</button>
        <button class="task"><svg viewBox="0 0 12 12" aria-hidden="true"><circle cx="6" cy="6" r="5.500" fill="#8fe07a"/><path d="M3 6h6M9 8.500C5 11 2 7 4 4.500S9 3 9 6" fill="none" stroke="#f6ffe8" stroke-width="1.500"/></svg>高级编辑器_百度经...</button>
        <button class="task"><svg viewBox="0 0 12 12" aria-hidden="true"><path d="M1 1h10v7H7l-3 3V8H1z" fill="#e4f2ff"/><path d="M3 4.500h6" stroke="#4a88d8"/></svg>新人交流</button>
        <span class="sogou">S</span>
        <div class="tray">
          <svg viewBox="0 0 12 12"><path d="M2 11c-1-5 1-10 4-10s5 5 4 10z" fill="#3a2020"/><ellipse cx="6" cy="8" rx="2.500" ry="3" fill="#f4f0ea"/><path d="M2 6h8v2H2z" fill="#d83a28"/></svg>
          <svg viewBox="0 0 12 12"><path d="M1 2h9v8H1z" fill="#c88848" stroke="#7a3a20"/><path d="M5 7l2 3 5-5" fill="none" stroke="#3aa838" stroke-width="1.800"/></svg>
          <svg viewBox="0 0 12 12"><path d="M1 5h6v5H1zM5 1h6v6H5z" fill="#2c4484" stroke="#dfe8f8" stroke-width=".7"/></svg>
          <svg viewBox="0 0 12 12"><circle cx="6" cy="6" r="4.500" fill="#b6bcc8" stroke="#5c6474"/><path d="M4 5h2l2-2v6L6 7H4z" fill="#38404e"/></svg>
          <svg viewBox="0 0 12 12"><path d="M6 1l5 1.500c0 4-2 7-5 8.500-3-1.500-5-4.500-5-8.500z" fill="#3fa848"/><path d="M6 3l3 1c0 2-1 4-3 5-2-1-3-3-3-5z" fill="#f4fff0"/></svg>
          <svg viewBox="0 0 12 12"><circle cx="6" cy="6" r="5.500" fill="#d8e030"/><path d="M6 3v6M3 6h6" stroke="#2f6a20" stroke-width="1.800"/></svg>
          <time>13:08</time>
        </div>
      </footer>

      <div class="meter"><span class="ball">47%</span><div class="rates"><span class="up">↑</span><span>0K/s</span><span class="down">↓</span><span>0K/s</span></div></div>
      <svg class="ears" viewBox="0 0 32 10" aria-hidden="true"><circle cx="11" cy="6" r="6" fill="#a9aba8"/><circle cx="27" cy="7" r="6" fill="#8f918e"/></svg>
      <div class="ime"><svg viewBox="0 0 54 12" aria-hidden="true"><path d="M1 3c3-2 3 2 0 3s0 5 2 3M14 2c0 4-2 6-6 6 4 4 9 0 6-6z" fill="#fff"/><path d="M18 5h1.500M21 8h1.500" stroke="#fff" stroke-width="1.500"/><path d="M26 3h8v6h-8z" fill="#cfeaf6"/><path d="M27 5h6M27 7h6" stroke="#3f90bc"/><path d="M40 1v4M36 9h8l-2-4h-4z" fill="#fff" stroke="#fff"/><path d="M47 10l4-5c0-3 2-3 3-1" fill="none" stroke="#fff" stroke-width="2"/></svg></div>
      <div class="balloon">
        <div class="bhead"><span>面</span><button aria-label="dismiss">${this.cross("#111")}</button></div>
        <a href="#">详细信息...</a>
        <svg class="tail" viewBox="0 0 20 12" aria-hidden="true"><path d="M0 0v1l9 9V1h3V0z" fill="#fffee0"/><path d="M0 1l13 10V2" fill="#fffee0" stroke="#333"/></svg>
      </div>
      <div class="brand">
        <svg viewBox="0 0 36 38" aria-hidden="true"><g fill="none" stroke="#d8dbe2" stroke-width="2.500" stroke-linejoin="round"><path d="M10 6c0-3 2-4 5-3l15 9c4 3 4 8 0 11L15 32c-3 2-5 0-5-3z"/><path d="M6 6c-3 1-4 3-4 6v16c0 6 4 8 9 6"/></g><path d="M14 13l7 5-7 5zM23 13h2v10h-2z" fill="#d8dbe2"/></svg>
        <p>溜溜自学<small>zixue.3D66.COM</small></p>
      </div>`;
  }
}
